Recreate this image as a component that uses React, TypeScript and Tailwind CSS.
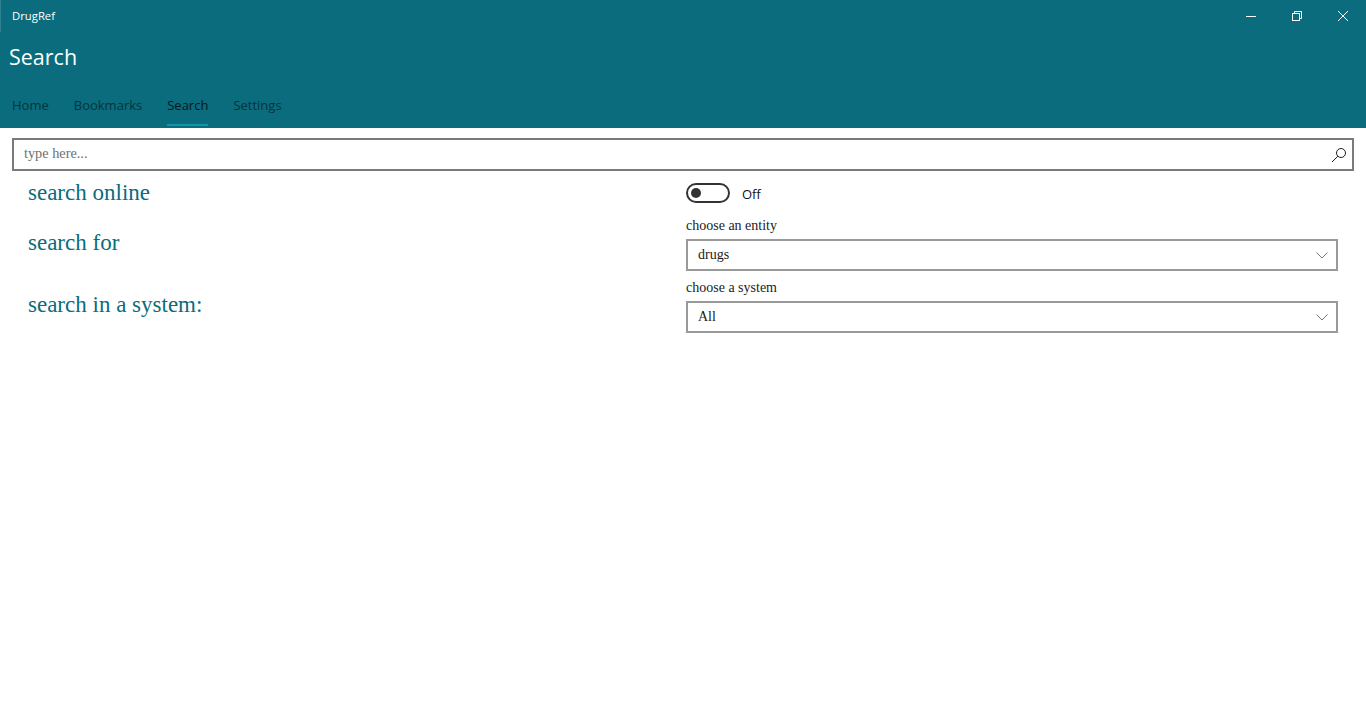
import React from "react";

const ui = "font-['Open_Sans','Noto_Sans',sans-serif]";
const serif = "font-['Liberation_Serif',serif]";

function Chevron() {
  return (
    <svg width="12" height="7" viewBox="0 0 12 7" fill="none" stroke="#777777" strokeWidth="1">
      <path d="M0.5 0.5 L6 6 L11.5 0.5" />
    </svg>
  );
}

function Select({ value }: { value: string }) {
  return (
    <div className="h-[32px] border-2 border-[#999999] flex items-center justify-between pl-[10px] pr-[8px]">
      <span className={`${serif} text-[14px] text-[#1a1a1a] mb-[1px]`}>{value}</span>
      <Chevron />
    </div>
  );
}

export default function App() {
  const tabs = ["Home", "Bookmarks", "Search", "Settings"];
  return (
    <div className="h-[728px] w-[1366px] bg-white overflow-hidden flex flex-col">
      <header className={`${ui} h-[128px] bg-[#0a6c7c] flex flex-col shrink-0`}>
        <div className="h-[32px] flex items-center justify-between border-l border-l-[#2f8290]">
          <span className="ml-[11px] text-[11.3px] text-white">DrugRef</span>
          <div className="flex items-center">
            <div className="w-[46px] flex justify-center">
              <svg width="10" height="10" viewBox="0 0 10 10" stroke="#fff" fill="none"><path d="M0 5.5H10" /></svg>
            </div>
            <div className="w-[46px] flex justify-center">
              <svg width="10" height="10" viewBox="0 0 10 10" stroke="#fff" fill="none">
                <rect x="0.5" y="2.5" width="7" height="7" />
                <path d="M2.5 2.5V0.5H9.5V7.5H7.5" />
              </svg>
            </div>
            <div className="w-[46px] flex justify-center">
              <svg width="10" height="10" viewBox="0 0 10 10" stroke="#fff" fill="none"><path d="M0 0L10 10M10 0L0 10" /></svg>
            </div>
          </div>
        </div>
        <div className="h-[52px] flex items-center pl-[9px] pb-[2px] text-[21.5px] text-white leading-none">Search</div>
        <nav className="flex-1 flex pl-[12px] gap-[25px] pt-[4px]">
          {tabs.map((t) => (
            <div key={t} className="flex flex-col h-full">
              <div className={`flex-1 flex items-center text-[13px] ${t === "Search" ? "text-[#04181c]" : "text-[#05343d]"}`}>{t}</div>
              <div className={`h-[2px] mb-[2px] ${t === "Search" ? "bg-[#0e97ac]" : "bg-transparent"}`} />
            </div>
          ))}
        </nav>
      </header>
      <main className="flex-1 px-[12px] pt-[10px]">
        <div className="h-[33px] border-2 border-[#7a7a7a] flex items-center justify-between pl-[10px] pr-[5px]">
          <span className={`${serif} text-[14.3px] text-[#6f6f6f] mb-[2px]`}>type here...</span>
          <svg width="16" height="16" viewBox="0 0 16 16" fill="none" stroke="#1f1f1f" strokeWidth="1">
            <circle cx="10" cy="6" r="4.5" />
            <path d="M6.8 9.2L1 15" />
          </svg>
        </div>
        <div className="grid grid-cols-[674px_1fr] mr-[16px] pt-[10px]">
          <div className={`${serif} pl-[16px] text-[23px] text-[#0a6c7c] leading-none`}>
            <div className="h-[50px]">search online</div>
            <div className="h-[62px]">search for</div>
            <div>search in a system:</div>
          </div>
          <div className="flex flex-col">
            <div className="h-[26px] flex items-center gap-[12px]">
              <div className="w-[44px] h-[20px] mb-[2px] rounded-full border-2 border-[#333333] flex items-center pl-[3px]">
                <div className="w-[10px] h-[10px] rounded-full bg-[#333333]" />
              </div>
              <span className={`${ui} text-[13px] text-[#111111] mt-[1px]`}>Off</span>
            </div>
            <div className={`${serif} mt-[6px] mb-[2px] h-[24px] flex items-center text-[14px] text-[#222222]`}>choose an entity</div>
            <Select value="drugs" />
            <div className={`${serif} mt-[4px] mb-[2px] h-[24px] flex items-center text-[14px] text-[#222222]`}>choose a system</div>
            <Select value="All" />
          </div>
        </div>
      </main>
    </div>
  );
}
